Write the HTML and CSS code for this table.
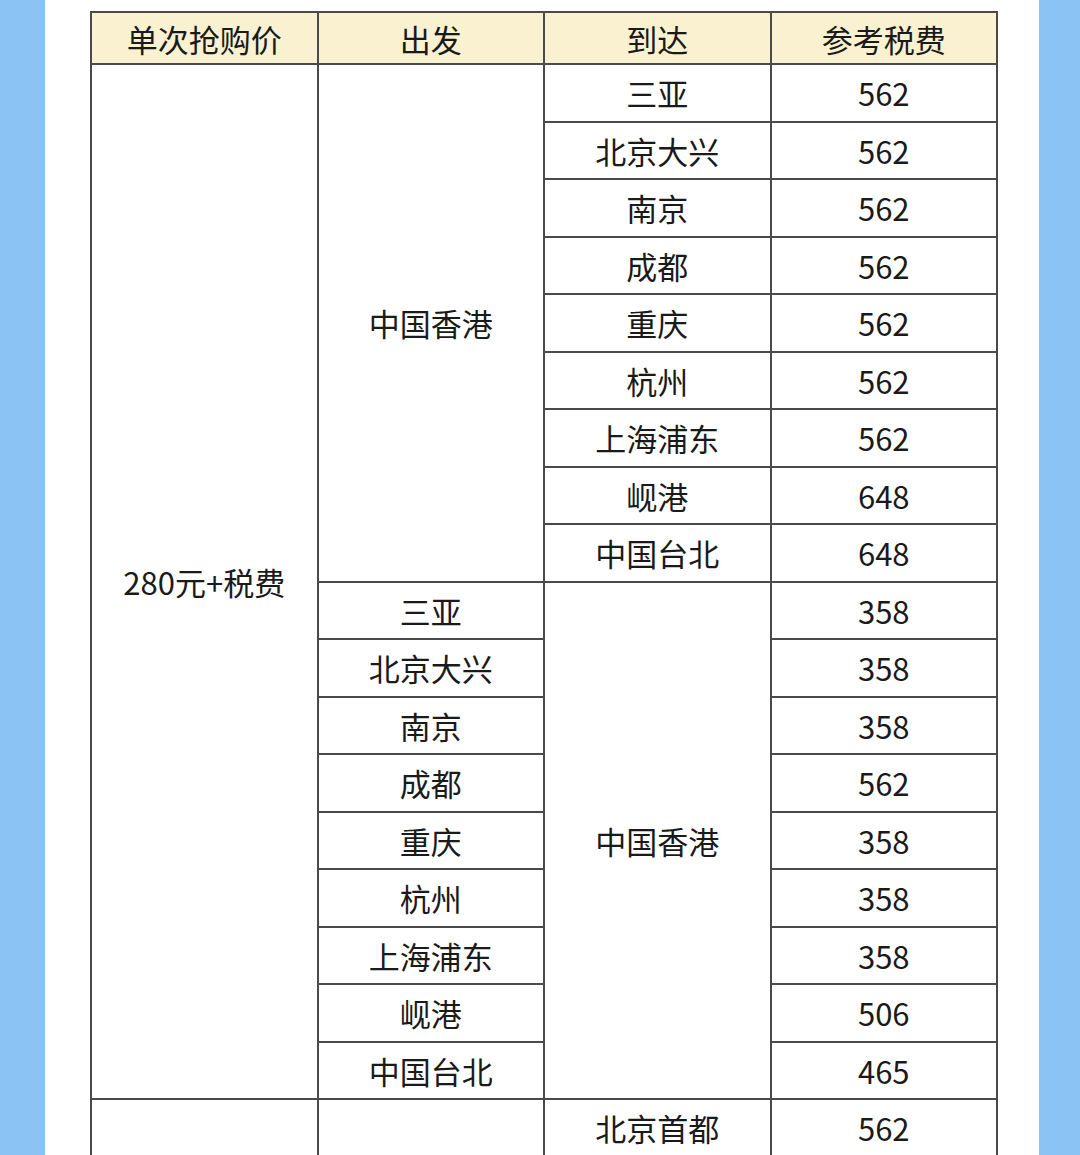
FILE: index.html
```html
<!DOCTYPE html>
<html lang="zh">
<head>
<meta charset="utf-8">
<link rel="stylesheet" href="styles.css">
</head>
<body>
<div class="page">
  <div class="band"></div>
  <div class="main">
    <table class="fares">
      <thead>
        <tr><th>单次抢购价</th><th>出发</th><th>到达</th><th>参考税费</th></tr>
      </thead>
      <tbody>
        <tr><td rowspan="18">280元+税费</td><td rowspan="9">中国香港</td><td>三亚</td><td>562</td></tr>
        <tr><td>北京大兴</td><td>562</td></tr>
        <tr><td>南京</td><td>562</td></tr>
        <tr><td>成都</td><td>562</td></tr>
        <tr><td>重庆</td><td>562</td></tr>
        <tr><td>杭州</td><td>562</td></tr>
        <tr><td>上海浦东</td><td>562</td></tr>
        <tr><td>岘港</td><td>648</td></tr>
        <tr><td>中国台北</td><td>648</td></tr>
        <tr><td>三亚</td><td rowspan="9">中国香港</td><td>358</td></tr>
        <tr><td>北京大兴</td><td>358</td></tr>
        <tr><td>南京</td><td>358</td></tr>
        <tr><td>成都</td><td>562</td></tr>
        <tr><td>重庆</td><td>358</td></tr>
        <tr><td>杭州</td><td>358</td></tr>
        <tr><td>上海浦东</td><td>358</td></tr>
        <tr><td>岘港</td><td>506</td></tr>
        <tr><td>中国台北</td><td>465</td></tr>
        <tr class="last"><td></td><td></td><td>北京首都</td><td>562</td></tr>
      </tbody>
    </table>
  </div>
  <div class="band band-right"></div>
</div>
</body>
</html>
```

FILE: styles.css
```css
html, body {
  margin: 0;
  padding: 0;
  background: #ffffff;
}

.page {
  display: flex;
  width: 1080px;
  height: 1155px;
  overflow: hidden;
}

.band {
  width: 45px;
  flex: none;
  background: #8bc3f4;
}

.band-right {
  width: 41px;
}

.main {
  flex: 1;
  padding: 11px 0 0 45px;
  overflow: hidden;
}

.fares {
  border-collapse: collapse;
  table-layout: fixed;
  width: 908px;
  font-family: "Noto Sans CJK SC", "Noto Sans", sans-serif;
  font-size: 31px;
  font-weight: 400;
  color: #1a1a1a;
}

.fares th,
.fares td {
  border: 2px solid #4a4a4a;
  text-align: center;
  vertical-align: middle;
  padding: 0;
  line-height: 1;
}

.fares th {
  background: #faf1d1;
  font-weight: 400;
  height: 50px;
}

.fares td {
  height: 55.5px;
}

.fares .last td {
  vertical-align: top;
  padding-top: 12px;
  height: 60px;
}
```
